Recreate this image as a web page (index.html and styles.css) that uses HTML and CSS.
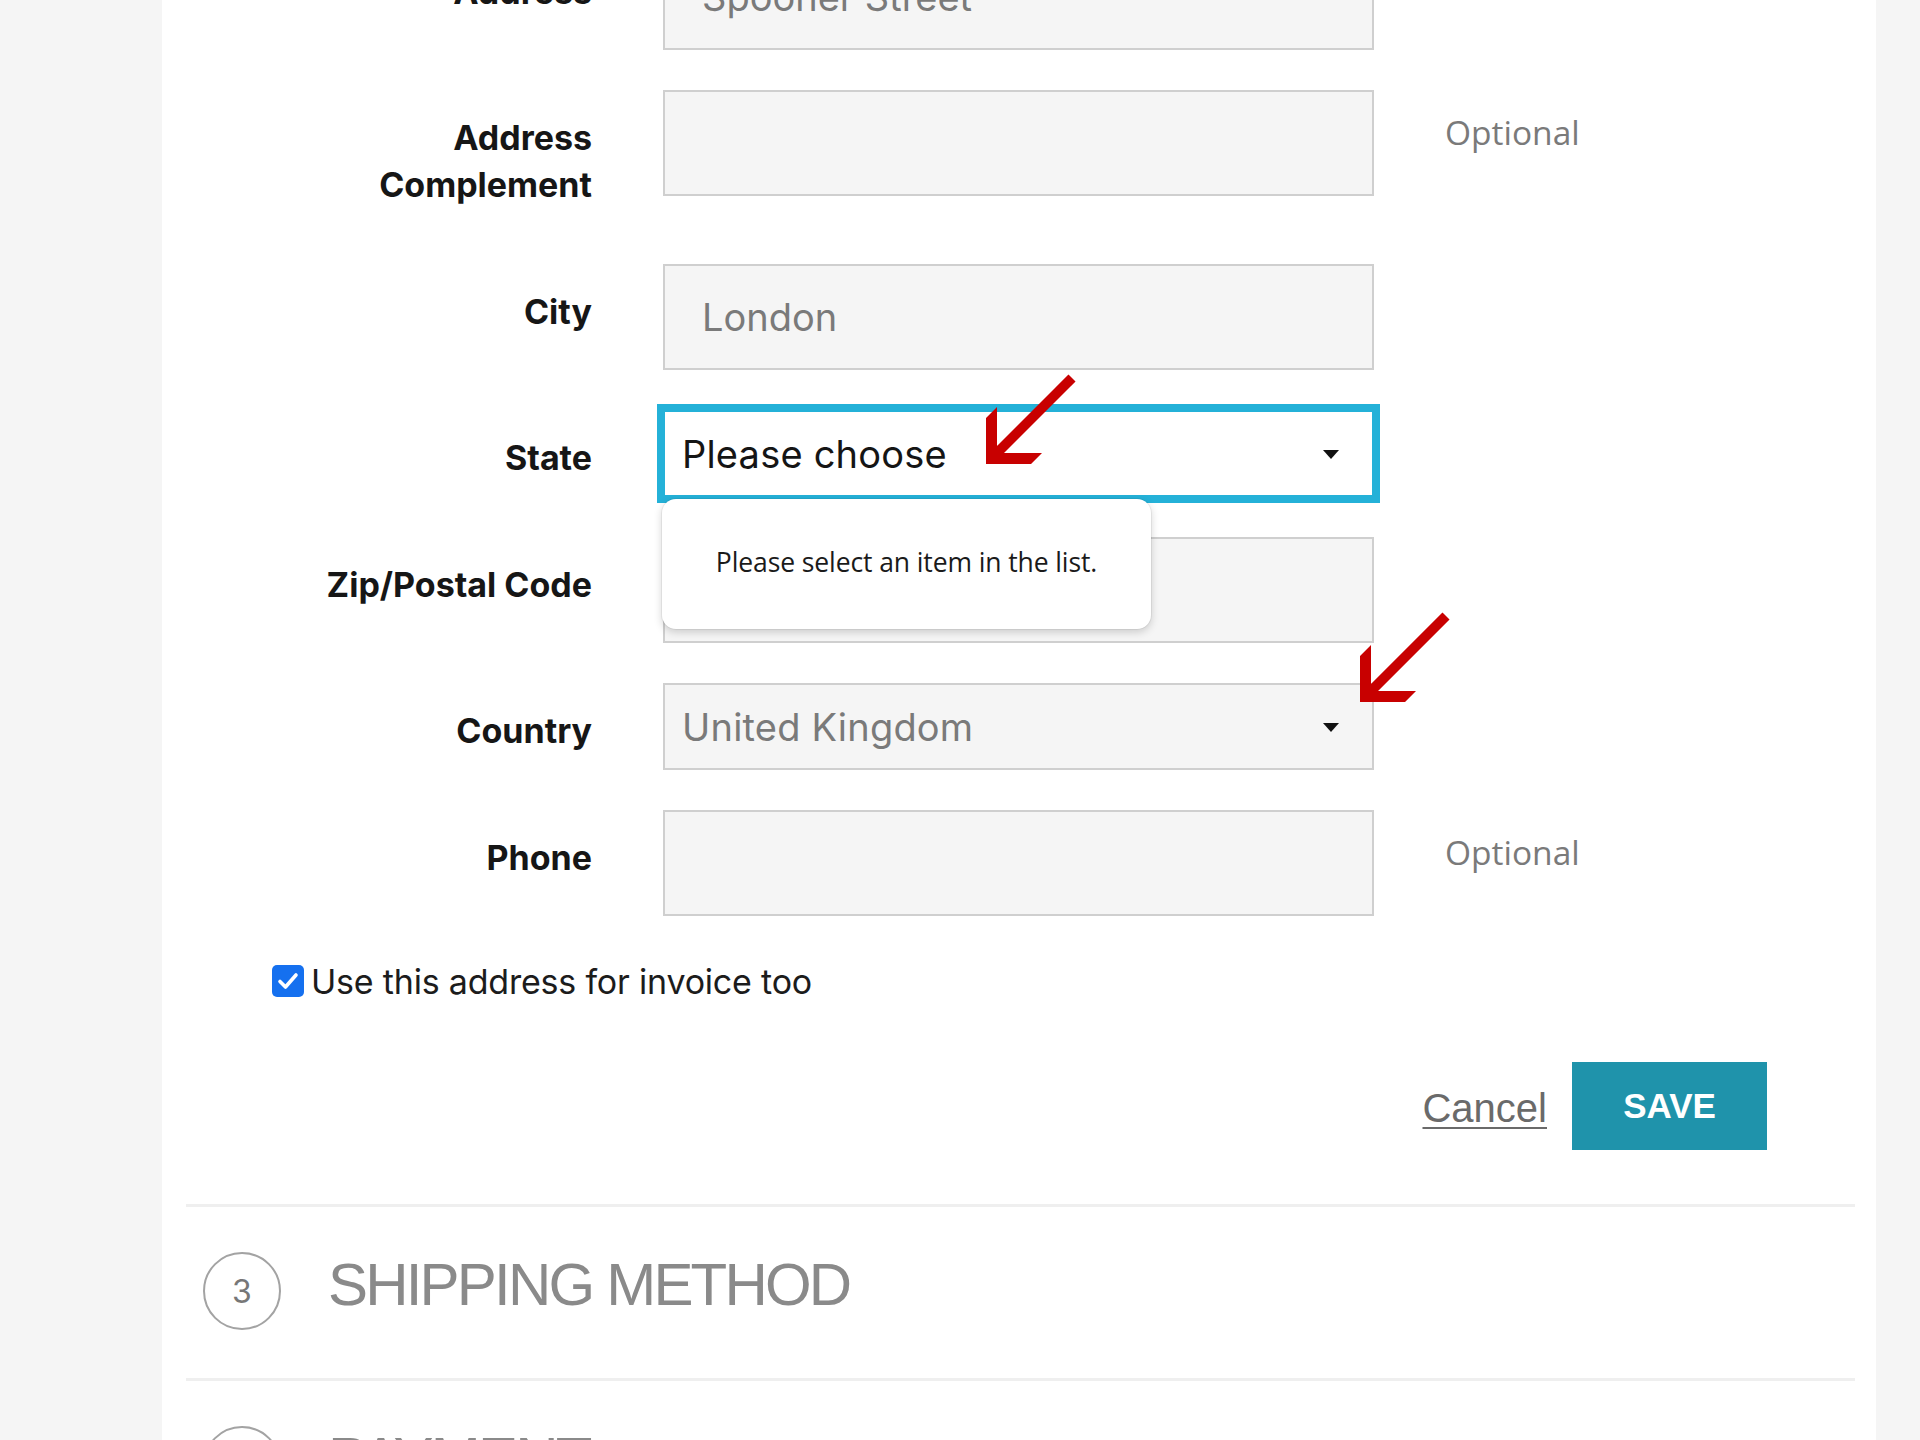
FILE: index.html
```html
<!DOCTYPE html>
<html lang="en">
<head>
<meta charset="utf-8">
<title>Shipping address</title>
<link rel="stylesheet" href="styles.css">
</head>
<body>
<div class="page">
  <div class="form">
    <div class="row">
      <div class="label">Address</div>
      <div class="field text"><span class="value">Spooner Street</span></div>
      <div class="hint"></div>
    </div>
    <div class="row">
      <div class="label">Address<br>Complement</div>
      <div class="field text"></div>
      <div class="hint">Optional</div>
    </div>
    <div class="row">
      <div class="label">City</div>
      <div class="field text"><span class="value">London</span></div>
      <div class="hint"></div>
    </div>
    <div class="row">
      <div class="label">State</div>
      <div class="field select focus">
        <span class="value">Please choose</span>
        <span class="caret"></span>
        <div class="tooltip">Please select an item in the list.</div>
      </div>
      <div class="hint"></div>
    </div>
    <div class="row">
      <div class="label">Zip/Postal Code</div>
      <div class="field text"></div>
      <div class="hint"></div>
    </div>
    <div class="row">
      <div class="label">Country</div>
      <div class="field select">
        <span class="value">United Kingdom</span>
        <span class="caret"></span>
      </div>
      <div class="hint"></div>
    </div>
    <div class="row">
      <div class="label">Phone</div>
      <div class="field text"></div>
      <div class="hint">Optional</div>
    </div>

    <div class="check">
      <span class="box"><svg width="32" height="32" viewBox="0 0 32 32"><path d="M8 16.5 L13.5 22 L24 10" fill="none" stroke="#fff" stroke-width="3.6" stroke-linecap="round" stroke-linejoin="round"/></svg></span>
      <span class="check-text">Use this address for invoice too</span>
    </div>

    <div class="actions">
      <a class="cancel">Cancel</a>
      <span class="save">SAVE</span>
    </div>
  </div>

  <div class="sections">
    <div class="section">
      <span class="num">3</span>
      <span class="title">SHIPPING METHOD</span>
    </div>
    <div class="section">
      <span class="num">4</span>
      <span class="title">PAYMENT</span>
    </div>
  </div>

  <svg class="arrow arrow-one" width="100" height="100" viewBox="0 0 100 100">
    <polygon points="6,92 6,46 17,35 17,81 62,81 51,92" fill="#c80000"/>
    <line x1="12" y1="86" x2="92" y2="6" stroke="#c80000" stroke-width="10"/>
  </svg>
  <svg class="arrow arrow-two" width="100" height="100" viewBox="0 0 100 100">
    <polygon points="6,92 6,46 17,35 17,81 62,81 51,92" fill="#c80000"/>
    <line x1="12" y1="86" x2="92" y2="6" stroke="#c80000" stroke-width="10"/>
  </svg>
</div>
</body>
</html>
```

FILE: styles.css
```css
html, body {
  margin: 0;
  padding: 0;
  overflow: hidden;
}

body {
  background: #f5f5f5;
  font-family: Inter, "Liberation Sans", sans-serif;
}

.page {
  position: relative;
  margin-left: 162px;
  width: 1714px;
  height: 1440px;
  background: #ffffff;
  overflow: hidden;
}

.form {
  margin-top: -56px;
}

.row {
  display: grid;
  grid-template-columns: 430px 711px 1fr;
  column-gap: 71px;
  align-items: start;
  margin-bottom: 40px;
}

.label {
  text-align: right;
  font-family: Inter, "Liberation Sans", sans-serif;
  font-weight: 700;
  font-size: 34px;
  line-height: 47px;
  letter-spacing: 0;
  color: #161616;
  padding: 24px 0 16px;
}

.field {
  position: relative;
  box-sizing: border-box;
  height: 106px;
  border: 2px solid #cfcfcf;
  background: #f5f5f5;
  display: flex;
  align-items: center;
  font-family: Inter, "Liberation Sans", sans-serif;
  font-size: 38px;
  color: #7a7a7a;
}

.field.text {
  padding-left: 37px;
}

.field.select {
  height: 87px;
  padding-left: 17px;
}

.field.select .value {
  letter-spacing: 0.2px;
}

.field.focus {
  background: #ffffff;
  border-color: #24b1d8;
  box-shadow: 0 0 0 6px #24b1d8;
  color: #151515;
  z-index: 2;
}

.caret {
  position: absolute;
  right: 33px;
  top: 50%;
  margin-top: -4px;
  width: 0;
  height: 0;
  border-left: 8px solid transparent;
  border-right: 8px solid transparent;
  border-top: 9px solid #111;
}

.tooltip {
  position: absolute;
  left: -3px;
  top: 87px;
  width: 489px;
  height: 130px;
  box-sizing: border-box;
  padding-bottom: 5px;
  background: #ffffff;
  border-radius: 14px;
  box-shadow: 0 3px 8px rgba(0, 0, 0, 0.18), 0 0 0 1px rgba(0, 0, 0, 0.05);
  display: flex;
  align-items: center;
  justify-content: center;
  font-family: "Open Sans", "Noto Sans", sans-serif;
  font-size: 26.5px;
  letter-spacing: -0.1px;
  color: #1a1a1a;
  z-index: 5;
}

.hint {
  font-family: "Open Sans", "Noto Sans", sans-serif;
  font-size: 33.5px;
  line-height: 47px;
  color: #7a7a7a;
  padding-top: 19px;
}

.check {
  display: flex;
  align-items: center;
  gap: 7px;
  height: 50px;
  margin-left: 110px;
}

.box {
  width: 32px;
  height: 32px;
  border-radius: 5px;
  background: #1570ef;
  display: block;
}

.box svg {
  display: block;
}

.check-text {
  font-family: Inter, "Liberation Sans", sans-serif;
  font-size: 34px;
  letter-spacing: -0.2px;
  color: #1c1c1c;
}

.actions {
  display: flex;
  justify-content: flex-end;
  align-items: center;
  gap: 25px;
  padding-right: 109px;
  margin-top: 56px;
}

.cancel {
  font-family: "Liberation Sans", Arial, sans-serif;
  font-size: 40px;
  color: #6a6a6a;
  text-decoration: underline;
  text-decoration-thickness: 2px;
  text-underline-offset: 5px;
  margin-top: 4px;
}

.save {
  width: 195px;
  height: 88px;
  background: #1f93ab;
  color: #ffffff;
  font-family: "Liberation Sans", Arial, sans-serif;
  font-weight: 700;
  font-size: 35px;
  display: flex;
  align-items: center;
  justify-content: center;
}

.sections {
  margin-top: 54px;
}

.section {
  margin: 0 21px 0 24px;
  border-top: 3px solid #efefef;
  padding: 45px 0 48px 17px;
  display: flex;
  align-items: center;
  gap: 47px;
}

.num {
  width: 78px;
  height: 78px;
  box-sizing: border-box;
  border: 2px solid #a3a3a3;
  border-radius: 50%;
  display: flex;
  align-items: center;
  justify-content: center;
  font-family: Inter, "Liberation Sans", sans-serif;
  font-weight: 400;
  font-size: 32px;
  color: #777;
}

.title {
  font-family: "Liberation Sans", Arial, sans-serif;
  font-size: 60px;
  line-height: 1;
  letter-spacing: -2.8px;
  color: #8a8a8a;
  margin-bottom: 12px;
}

.arrow {
  position: absolute;
  display: block;
  z-index: 10;
}

.arrow-one {
  left: 818px;
  top: 372px;
}

.arrow-two {
  left: 1192px;
  top: 610px;
}
```
